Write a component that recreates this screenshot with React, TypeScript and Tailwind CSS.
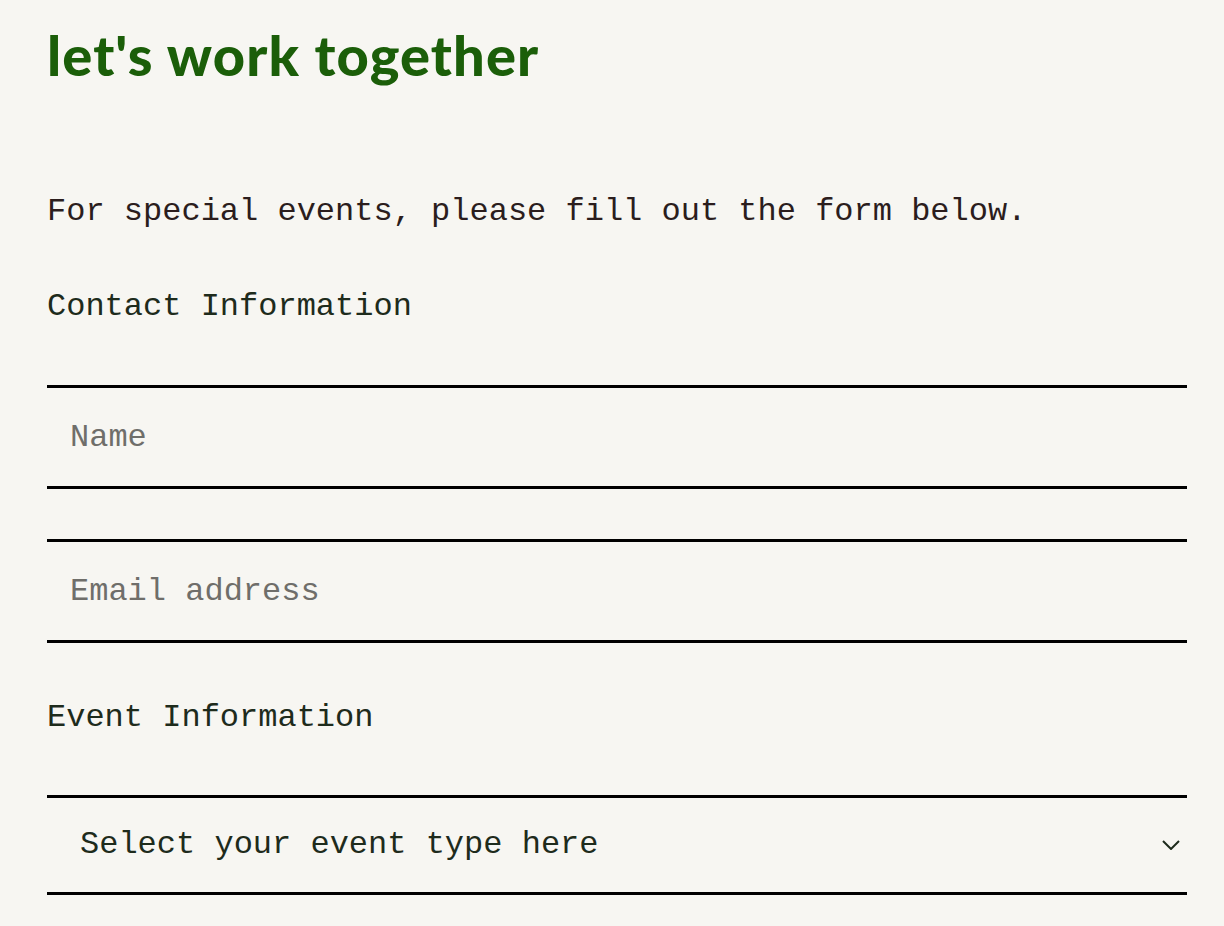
import React from 'react';

const mono = { fontFamily: '"Liberation Mono", "Courier New", monospace' };

const App: React.FC = () => {
    return (
        <div className="min-h-[926px] w-full bg-[#f7f6f2]">
            <div className="pl-[47px] pr-[37px]" style={mono}>
                <h1
                    className="pt-[22px] text-[56px] font-black leading-[66px] tracking-[1.1px] text-[#1b5e09]"
                    style={{ fontFamily: '"Futura", "Lato", "Noto Sans", sans-serif' }}
                >
                    let's work together
                </h1>

                <p className="mt-[104px] text-[32px] leading-[40px] text-[#2b1d1d]">
                    For special events, please fill out the form below.
                </p>

                <form className="flex flex-col" onSubmit={(e) => e.preventDefault()}>
                    <label className="mt-[55px] text-[32px] leading-[40px] text-[#1e2b1c]">Contact Information</label>

                    <input
                        type="text"
                        placeholder="Name"
                        className="mt-[58px] h-[104px] w-full border-t-[3px] border-b-[3px] border-solid border-black bg-transparent px-[23px] text-[32px] text-[#1e2b1c] outline-none placeholder:text-[#6f6e6a]"
                    />
                    <input
                        type="email"
                        placeholder="Email address"
                        className="mt-[50px] h-[104px] w-full border-t-[3px] border-b-[3px] border-solid border-black bg-transparent px-[23px] text-[32px] text-[#1e2b1c] outline-none placeholder:text-[#6f6e6a]"
                    />

                    <label className="mt-[55px] text-[32px] leading-[40px] text-[#1e2b1c]">Event Information</label>

                    <div className="relative mt-[57px]">
                        <select
                            defaultValue=""
                            className="h-[100px] w-full appearance-none border-t-[3px] border-b-[3px] border-solid border-black bg-transparent pl-[33px] pr-[60px] text-[32px] text-[#1e2b1c] outline-none"
                            style={mono}
                        >
                            <option value="" disabled>Select your event type here</option>
                            <option value="wedding">Wedding</option>
                            <option value="corporate">Corporate</option>
                            <option value="private">Private party</option>
                        </select>
                        <svg
                            className="pointer-events-none absolute right-[7px] top-1/2 h-[10px] w-[18px] -translate-y-1/2 text-[#1e2b1c]"
                            viewBox="0 0 18 10"
                            fill="none"
                            stroke="currentColor"
                            strokeWidth={2}
                        >
                            <path d="M1 1l8 8 8-8" />
                        </svg>
                    </div>
                </form>
            </div>
        </div>
    );
};

export default App;
